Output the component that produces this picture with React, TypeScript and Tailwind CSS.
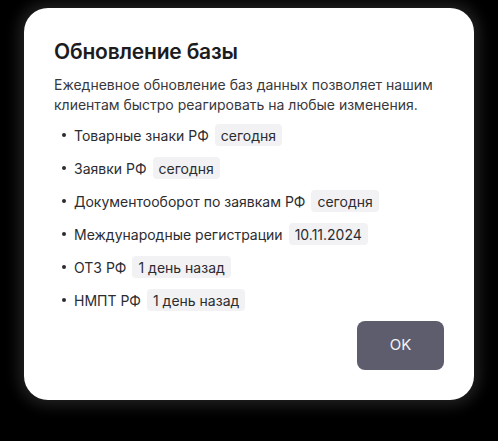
const items: { name: string; date: string }[] = [
  { name: "Товарные знаки РФ", date: "сегодня" },
  { name: "Заявки РФ", date: "сегодня" },
  { name: "Документооборот по заявкам РФ", date: "сегодня" },
  { name: "Международные регистрации", date: "10.11.2024" },
  { name: "ОТЗ РФ", date: "1 день назад" },
  { name: "НМПТ РФ", date: "1 день назад" },
];

export default function App() {
  return (
    <div className="w-[498px] h-[441px] bg-black pt-2 pl-6 font-['Inter',sans-serif]">
      <div className="w-[450px] h-[392px] bg-white rounded-[24px] shadow-[0_0_14px_6px_rgba(90,90,90,0.35)] px-[30px] pt-[30px] pb-[30px] flex flex-col">
        <h2 className="text-[21px] leading-[28px] font-semibold text-[#1c1c1e] tracking-[-0.2px]">
          Обновление базы
        </h2>
        <p className="mt-[9px] text-[14px] leading-[20px] text-[#38383c]">
          Ежедневное обновление баз данных позволяет нашим клиентам быстро реагировать на любые изменения.
        </p>
        <ul className="mt-[9px] flex flex-col gap-[11px]">
          {items.map((it) => (
            <li key={it.name} className="flex items-center h-[22px] text-[14px] text-[#2c2c30]">
              <span className="w-[4px] h-[4px] rounded-full bg-[#2c2c30] ml-[8px] mr-[8px]" />
              <span>{it.name}</span>
              <span className="ml-[6px] h-[22px] px-[6px] rounded-[4px] bg-[#f2f2f4] flex items-center">
                {it.date}
              </span>
            </li>
          ))}
        </ul>
        <div className="mt-auto flex justify-end">
          <button className="w-[87px] h-[49px] rounded-[8px] bg-[#5e5d6e] text-[#f4f4f6] text-[15px]">
            OK
          </button>
        </div>
      </div>
    </div>
  );
}
